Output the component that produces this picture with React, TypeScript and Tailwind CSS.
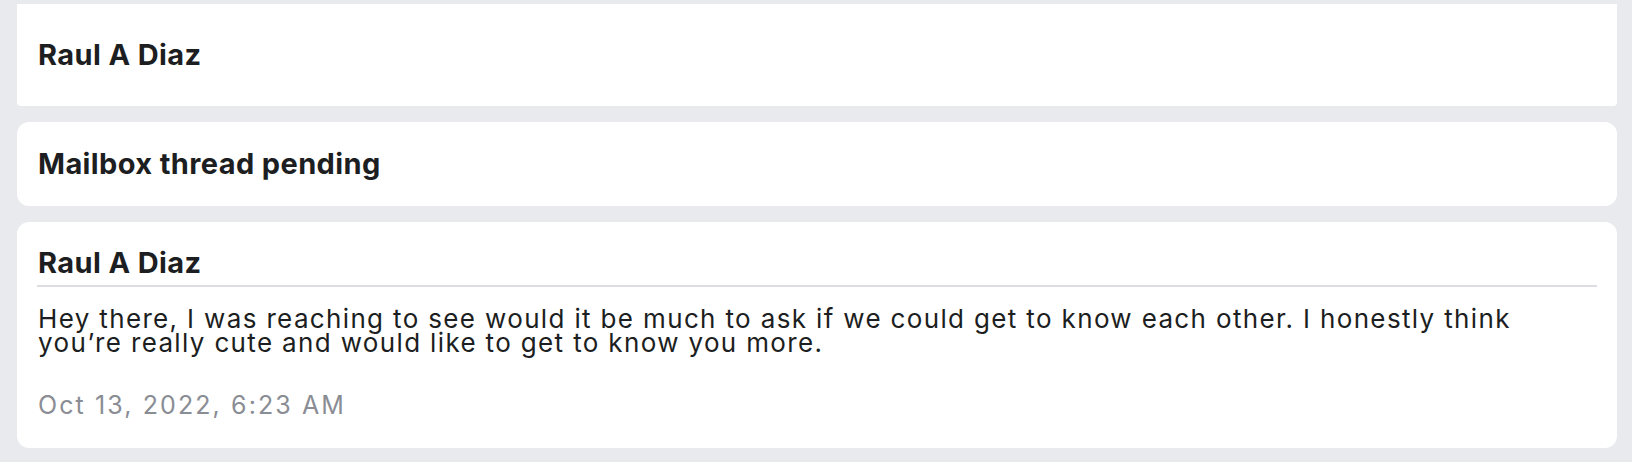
const message = {
  author: 'Raul A Diaz',
  body: 'Hey there, I was reaching to see would it be much to ask if we could get to know each other. I honestly think you’re really cute and would like to get to know you more.',
  sentAt: 'Oct 13, 2022, 6:23 AM',
};

const App = () => {
  return (
    <div
      className="w-full h-[462px] overflow-hidden bg-[#e9eaee] pt-[4px] pl-[17px] pr-[15px] flex flex-col gap-4 text-[#1c1e21]"
      style={{ fontFamily: 'Inter, "Noto Sans", sans-serif' }}
    >
      <div className="h-[102px] shrink-0 bg-white rounded-b-[4px] flex items-center px-[21px] pb-[2px]">
        <p className="text-[29px] leading-none font-bold tracking-[0.38px]">{message.author}</p>
      </div>

      <div className="h-[84px] shrink-0 bg-white rounded-xl flex items-center px-[21px] pb-[2px]">
        <p className="text-[29px] leading-none font-bold tracking-[0.38px]">Mailbox thread pending</p>
      </div>

      <div className="h-[226px] shrink-0 bg-white rounded-xl px-[20px] pt-[25px]">
        <p className="text-[29px] leading-[32px] font-bold tracking-[0.38px] pb-[6px] border-b-2 border-[#dcdde2] pl-px">
          {message.author}
        </p>
        <p className="mt-[20px] pr-[40px] text-[26px] leading-[24px] tracking-[1.35px] pl-px">{message.body}</p>
        <p className="mt-[38px] text-[25px] leading-[24px] tracking-[2.1px] text-[#8a8d94] pl-px">
          {message.sentAt}
        </p>
      </div>
    </div>
  );
};

export default App;
